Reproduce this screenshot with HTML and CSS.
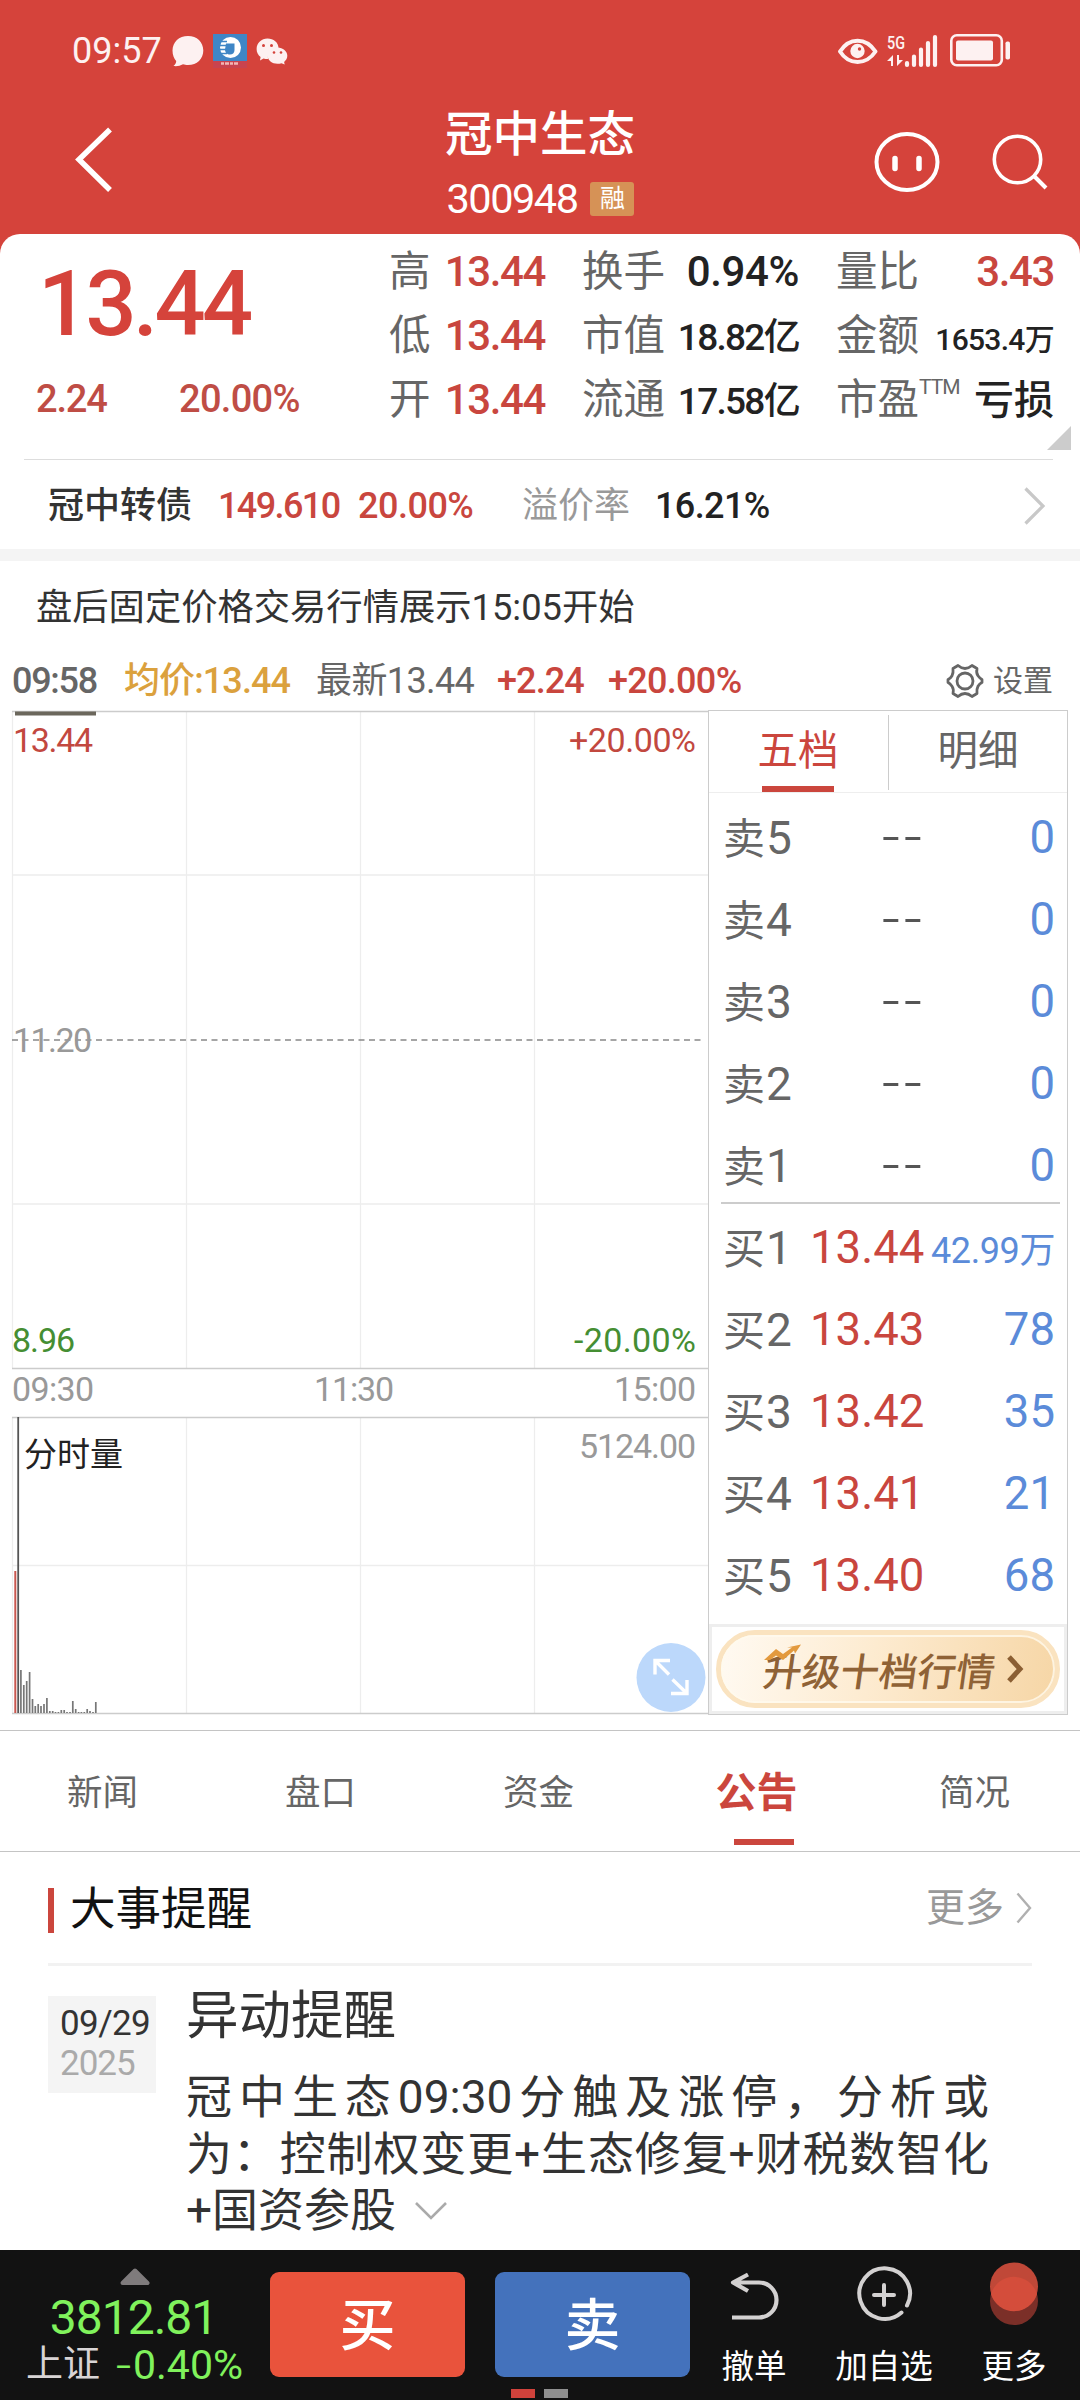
FILE: index.html
```html
<!DOCTYPE html>
<html lang="zh-CN">
<head>
<meta charset="utf-8">
<title>冠中生态 300948</title>
<link rel="stylesheet" href="styles.css">
</head>
<body>
<div class="screen">
  <header class="header">
    <div class="status">
      <span class="clock">09:57</span>
      <svg class="status-left" width="120" height="36" viewBox="170 33 120 36">
        <path fill="#fdf1f1" d="M188 36c9 0 15.300 6 15.300 14.500s-6.300 14.500-15.300 14.500c-2 0-3.500-.2-5-.7-3 1.700-6 2.200-9.500 1.800 2-1.600 2.700-3.200 2.700-5-2.200-2.700-3.700-6.200-3.700-10.600C172.500 42 179 36 188 36z"/>
        <rect x="213" y="34" width="34" height="34" fill="#3f86c6"/>
        <rect x="213" y="61" width="34" height="7" fill="#c9434e"/>
        <path d="M221 63.500h3M225 63.500h4M230 63.500h3M234 63.500h4" stroke="#f3b5b5" stroke-width="2.500"/>
        <circle cx="230.500" cy="47.500" r="10.500" fill="#fff"/>
        <path d="M226 43.500h8.500v6.500c0 3-2 4.500-4.500 4.500-3 0-5-2-5-5z" fill="#3f86c6"/>
        <path d="M219 41.500h8M219 45.500h7M219 49.500h7M219 53.500h8" stroke="#3f86c6" stroke-width="1.500"/>
        <path fill="#fdf1f1" d="M267.500 38.500c6 0 11 4 11 9.500-5.500.5-11.500 5-10.500 11-2 0-3 0-4.500-.6l-3.500 2 .6-3.400c-2.500-2-4-4.500-4-8 0-6 5-10.500 10.900-10.500z"/>
        <path fill="#fdf1f1" d="M277.500 47.500c5.500 0 9.800 3.700 9.800 8.300 0 2.500-1.200 4.600-3.200 6.100l.6 2.700-3.200-1.400c-1.300.4-2.600.6-4 .6-5.500 0-9.800-3.500-9.800-8s4.300-8.300 9.800-8.300z"/>
        <g fill="#d5433b"><circle cx="263.500" cy="45.500" r="1.500"/><circle cx="271.500" cy="45.500" r="1.500"/><circle cx="274" cy="52.500" r="1.300"/><circle cx="281" cy="52.500" r="1.300"/></g>
      </svg>
      <svg class="status-right" width="180" height="36" viewBox="835 33 180 36">
        <path d="M840 51.500c9-14.500 26-14.500 35.500 0-9.500 14-26.500 14-35.500 0z" fill="none" stroke="#fdf1f1" stroke-width="4" stroke-linejoin="round"/>
        <circle cx="857.500" cy="51" r="7.200" fill="#fdf1f1"/><circle cx="859.500" cy="49" r="1.700" fill="#d5433b"/>
        <text x="887" y="48.500" class="net" textLength="18" lengthAdjust="spacingAndGlyphs">5G</text>
        <path d="M893 66V55l-6 6h4v5zM897 55v11l6-6h-4v-5z" fill="#fdf1f1"/>
        <path d="M907 63v2M914 56.500v8.500M921 49.500v15.500M928 43v22M935 37v28" stroke="#fdf1f1" stroke-width="4.200" stroke-linecap="round"/>
        <rect x="951.300" y="35.300" width="50.500" height="30" rx="5.500" fill="none" stroke="#fdf1f1" stroke-width="2.600"/>
        <rect x="956" y="40.500" width="37" height="20" rx="2" fill="#fdf1f1"/>
        <rect x="1005.500" y="41.500" width="4.500" height="18" rx="1.800" fill="#fdf1f1"/>
      </svg>
    </div>
    <div class="nav">
      <svg class="back" width="44" height="72" viewBox="72 123 44 72"><path d="M110 129.500 79 159.500l31 30.500" fill="none" stroke="#fff" stroke-width="5.500"/></svg>
      <div class="title">
        <h1>冠中生态</h1>
        <div class="code-row"><span class="code">300948</span><span class="badge">融</span></div>
      </div>
      <svg class="nav-icons" width="180" height="68" viewBox="870 128 180 68">
        <ellipse cx="907" cy="162" rx="30.500" ry="28" fill="none" stroke="#fff" stroke-width="4"/>
        <path d="M895 158.500v10M919 158.500v10" stroke="#fff" stroke-width="5.500" stroke-linecap="round"/>
        <circle cx="1017.500" cy="159.500" r="23.200" fill="none" stroke="#fff" stroke-width="3.600"/>
        <path d="M1034 176l12 12" stroke="#fff" stroke-width="4"/>
      </svg>
    </div>
  </header>

  <section class="quote">
    <div class="price-block">
      <div class="price">13.44</div>
      <div class="change"><span class="diff">2.24</span><span>20.00%</span></div>
    </div>
    <div class="stats">
      <div class="col col-a">
        <div class="stat"><label>高</label><b class="up">13.44</b></div>
        <div class="stat"><label>低</label><b class="up">13.44</b></div>
        <div class="stat"><label>开</label><b class="up">13.44</b></div>
      </div>
      <div class="col col-b">
        <div class="stat"><label>换手</label><b class="pct">0.94%</b></div>
        <div class="stat"><label>市值</label><b class="mid">18.82亿</b></div>
        <div class="stat"><label>流通</label><b class="mid">17.58亿</b></div>
      </div>
      <div class="col col-c">
        <div class="stat"><label>量比</label><b class="up">3.43</b></div>
        <div class="stat"><label>金额</label><b class="small">1653.4万</b></div>
        <div class="stat"><label>市盈<sup>TTM</sup></label><b class="cjk">亏损</b></div>
      </div>
    </div>
    <i class="corner"></i>
  </section>

  <section class="bond">
    <span class="bond-name">冠中转债</span>
    <span class="bond-price">149.610</span>
    <span class="bond-pct">20.00%</span>
    <span class="bond-label">溢价率</span>
    <span class="bond-prem">16.21%</span>
    <svg class="bond-arrow" width="24" height="40" viewBox="0 0 24 40"><path d="M2.500 2.500 20 20 2.500 37.500" fill="none" stroke="#c8c8c8" stroke-width="3.200"/></svg>
  </section>

  <div class="notice">盘后固定价格交易行情展示15:05开始</div>

  <div class="ticker">
    <span class="t-time">09:58</span>
    <span class="t-avg">均价:<i>13.44</i></span>
    <span class="t-last">最新<i>13.44</i></span>
    <span class="t-diff">+2.24</span>
    <span class="t-pct">+20.00%</span>
    <span class="t-set">
      <svg width="38" height="36" viewBox="-19 -18 38 36"><path d="M-7-15.500Q-3.500-12.500 0-12.500T7-15.500L12-12.500Q11-8 13-5.200T17-1.500V1.500Q14.500 2.500 13 5.200T12 12.500L7 15.500Q3.500 12.500 0 12.500T-7 15.500L-12 12.500Q-11 8-13 5.200T-17 1.500V-1.500Q-14.500-2.500-13-5.200T-12-12.500Z" fill="none" stroke="#666" stroke-width="2.800" stroke-linejoin="round"/><circle r="8" fill="none" stroke="#666" stroke-width="2.800"/></svg>
      设置
    </span>
  </div>

  <main class="market">
    <svg class="chart" width="708" height="1014" viewBox="0 705 708 1014">
      <g fill="none" stroke="#ededed" stroke-width="1.300">
        <path d="M12.500 711V1368M186.500 711V1368M360.500 711V1368M534.500 711V1368M12.500 1417V1713M186.500 1417V1713M360.500 1417V1713M534.500 1417V1713M12 875H708M12 1204H708M12 1565.500H708"/>
      </g>
      <path d="M12 711.500H708M12 1368.500H708M12 1417.500H708M12 1713.500H708" stroke="#ccc" stroke-width="1.400"/>
      <path d="M12 1040H703" stroke="#888" stroke-width="1.700" stroke-dasharray="6 4.500"/>
      <path d="M15 713.500H96" stroke="#6b675c" stroke-width="4"/>
      <g class="axis">
        <text class="rise" x="13" y="752" textLength="80">13.44</text>
        <text class="rise" x="569" y="752" textLength="127">+20.00%</text>
        <text x="13" y="1052" textLength="79">11.20</text>
        <text class="fall" x="12" y="1352" textLength="63">8.96</text>
        <text class="fall" x="574" y="1352" textLength="122">-20.00%</text>
        <text x="12" y="1401" textLength="82">09:30</text>
        <text x="314" y="1401" textLength="80">11:30</text>
        <text x="614" y="1401" textLength="82">15:00</text>
        <text x="579" y="1458" textLength="117">5124.00</text>
        <text class="vol-name" x="24" y="1466">分时量</text>
      </g>
      <path d="M15.300 1571V1713" stroke="#c9574f" stroke-width="2"/>
      <path d="M18.200 1417V1713" stroke="#555" stroke-width="1.800"/>
      <path stroke="#777" stroke-width="1.700" d="M20.900 1670V1713M23.800 1685V1713M26.700 1681V1713M29.600 1672V1713M32.500 1699V1713M35.300 1706V1713M38.200 1704V1713M41 1706V1713M44 1704V1713M46.900 1698V1713M49.800 1711V1713M52.700 1711V1713M55.500 1712V1713M58.400 1712V1713M61.300 1710V1713M64.200 1710V1713M67 1712V1713M70 1712V1713M72.800 1701V1713M75.700 1709V1713M78.600 1712V1713M81.400 1712V1713M84.300 1712V1713M87.200 1709V1713M90 1711V1713M93 1712V1713M95.800 1702V1713"/>
      <circle cx="671" cy="1677.500" r="34.500" fill="#bcd8fb"/>
      <path d="M655 1674.500V1660.500H670M656 1661.500 669 1674.500M672.500 1679.500 686 1692.500M687 1680V1693.500H671" fill="none" stroke="#fff" stroke-width="3.400"/>
    </svg>

    <aside class="book">
      <div class="book-tabs"><span class="active">五档</span><span>明细</span></div>
      <div class="levels">
        <div class="level"><span>卖<i>5</i></span><em class="none">--</em><b>0</b></div>
        <div class="level"><span>卖<i>4</i></span><em class="none">--</em><b>0</b></div>
        <div class="level"><span>卖<i>3</i></span><em class="none">--</em><b>0</b></div>
        <div class="level"><span>卖<i>2</i></span><em class="none">--</em><b>0</b></div>
        <div class="level last-sell"><span>卖<i>1</i></span><em class="none">--</em><b>0</b></div>
        <div class="level"><span>买<i>1</i></span><em>13.44</em><b class="wan">42.99万</b></div>
        <div class="level"><span>买<i>2</i></span><em>13.43</em><b>78</b></div>
        <div class="level"><span>买<i>3</i></span><em>13.42</em><b>35</b></div>
        <div class="level"><span>买<i>4</i></span><em>13.41</em><b>21</b></div>
        <div class="level"><span>买<i>5</i></span><em>13.40</em><b>68</b></div>
      </div>
      <div class="upgrade">
        <div class="pill">
          <span class="pill-text">升级十档行情</span>
          <svg class="pill-arrow" width="18" height="28" viewBox="0 0 18 28"><path d="M2 2 13 14 2 26" fill="none" stroke="#8b5f33" stroke-width="5"/></svg>
          <svg class="trend" width="38" height="18" viewBox="0 0 38 18"><path d="M0 16 12 5l7 5L28 3.500h-5l14-3-6 9-1-3-11 9.500-7-4.500-6 4.500z" fill="#e39a3e"/></svg>
        </div>
      </div>
    </aside>
  </main>

  <nav class="tabs">
    <span>新闻</span><span>盘口</span><span>资金</span><span class="active">公告</span><span>简况</span>
  </nav>

  <section class="events">
    <div class="events-head">
      <h2>大事提醒</h2>
      <span class="more">更多<svg width="16" height="32" viewBox="0 0 16 32"><path d="M1.500 1.500 14 16 1.500 30.500" fill="none" stroke="#b0b0b0" stroke-width="2.400"/></svg></span>
    </div>
    <article class="event">
      <div class="date"><span>09/29</span><span class="year">2025</span></div>
      <div class="event-body">
        <h3>异动提醒</h3>
        <p>冠中生态09:30分触及涨停，分析或为：控制权变更+生态修复+财税数智化+国资参股<svg class="fold" width="34" height="20" viewBox="0 0 34 20"><path d="M2 2 17 17 32 2" fill="none" stroke="#aaa" stroke-width="2.600"/></svg></p>
      </div>
    </article>
  </section>

  <footer class="bar">
    <div class="index">
      <svg width="32" height="18" viewBox="0 0 32 18"><path d="M16 2.500 28.500 15h-25z" fill="#7f7b7c" stroke="#7f7b7c" stroke-width="4" stroke-linejoin="round"/></svg>
      <div class="index-value">3812.81</div>
      <div class="index-row"><span class="index-name">上证</span><span class="index-pct"><i>-</i>0.40%</span></div>
    </div>
    <div class="btn buy">买</div>
    <div class="btn sell">卖</div>
    <div class="action act-1">
      <svg width="56" height="56" viewBox="727 2266 56 56"><path d="M749 2274.500 734 2282.500l15 8.500M735 2282.500h25a17.500 17.500 0 0 1 0 35h-27" fill="none" stroke="#d3d1d1" stroke-width="4.200" stroke-linejoin="round"/></svg>
      <span>撤单</span>
    </div>
    <div class="action act-2">
      <svg width="60" height="56" viewBox="855 2266 60 56"><path d="M908 2305.500A25.300 25.300 0 1 0 902.500 2312.500" fill="none" stroke="#d3d1d1" stroke-width="4" stroke-linecap="round"/><path d="M885 2285v20M875 2295h20" stroke="#d3d1d1" stroke-width="4" stroke-linecap="round"/></svg>
      <span>加自选</span>
    </div>
    <div class="action act-3">
      <svg width="52" height="66" viewBox="988 2261 52 66"><circle cx="1014" cy="2302" r="24" fill="#7b2f28"/><circle cx="1014" cy="2287.500" r="24" fill="#c04838"/><path d="M991 2295a24 24 0 0 1 46 0 24 24 0 0 1-46 0z" fill="#d44d3b"/></svg>
      <span>更多</span>
    </div>
    <div class="dots"><i></i><i></i></div>
  </footer>
</div>
</body>
</html>
```
FILE: styles.css
```css
* { box-sizing: border-box; }
body { margin: 0; background: #fff; font-family: Roboto, "Noto Sans CJK SC", sans-serif; color: #333; }
h1, h2, h3, p { margin: 0; font-weight: 400; }
i, em { font-style: normal; }
b { font-weight: 500; }
svg { display: block; flex: none; }
span { white-space: nowrap; }
.screen { width: 1080px; height: 2400px; overflow: hidden; display: flex; flex-direction: column; background: #d5433b; }

/* header */
.header { flex: none; height: 234px; color: #fff; }
.status { height: 100px; padding-top: 1px; display: flex; align-items: center; }
.clock { width: 98px; margin-left: 72px; font-size: 36px; color: #fdf1f1; letter-spacing: 0; }
.status-right { margin-left: 545px; }
.net { font: 500 18px Roboto, sans-serif; fill: #fdf1f1; }
.nav { height: 134px; display: flex; align-items: flex-start; }
.back { margin: 23px 0 0 72px; }
.title { width: 400px; margin-left: 224px; padding-top: 3px; display: flex; flex-direction: column; align-items: center; }
h1 { font-size: 47.500px; line-height: 64px; font-weight: 500; height: 64px; }
.code-row { display: flex; align-items: center; height: 36px; margin-top: 14px; font-size: 41.500px; line-height: 38px; letter-spacing: -1.500px; padding-left: 1px; }
.badge { margin-left: 13px; width: 44px; height: 34px; border-radius: 3px; background: #d69256; font-size: 25px; line-height: 33px; letter-spacing: 0; text-align: center; }
.nav-icons { margin: 28px 0 0 130px; }

/* quote */
.quote { flex: none; height: 225px; position: relative; background: #fff; border-radius: 20px 20px 0 0; display: flex; }
.price-block { width: 388px; color: #d5433b; }
.price { margin: 21px 0 0 38px; font-size: 90px; line-height: 100px; font-weight: 500; letter-spacing: -3.600px; }
.change { display: flex; margin-top: 22px; padding-left: 36px; font-size: 38px; line-height: 44px; color: #bf4d45; font-weight: 500; }
.change span { letter-spacing: -0.700px; }
.change .diff { width: 143px; letter-spacing: -1.200px; }
.stats { display: flex; padding-top: 6px; }
.col-a { width: 156px; margin-left: 1px; margin-right: 37px; }
.col-b { width: 217px; margin-right: 37px; }
.col-c { width: 218px; }
.stat { display: flex; justify-content: space-between; align-items: baseline; height: 64px; line-height: 64px; }
.stat label { font-size: 41.500px; color: #666; white-space: nowrap; }
.stat b { font-size: 42px; color: #222; white-space: nowrap; letter-spacing: -1.400px; }
.stat b.up { color: #c9463e; }
.stat b.pct { letter-spacing: -0.400px; }
.stat b.mid { font-size: 37px; letter-spacing: -1.700px; }
.stat b.small { font-size: 30px; letter-spacing: -0.700px; }
.stat b.cjk { font-size: 40px; letter-spacing: 0; }
sup { font-size: 21px; line-height: 0; vertical-align: 20px; letter-spacing: -1px; }
.corner { position: absolute; left: 1047px; top: 192px; border-left: 24px solid transparent; border-bottom: 24px solid #ccc; }

/* convertible bond */
.bond { flex: none; height: 102px; background: #fff; border-bottom: 12px solid #f4f4f4; display: flex; align-items: center; font-size: 36px; line-height: 44px; position: relative; padding-top: 4px; }
.bond::before { content: ""; position: absolute; left: 24px; right: 27px; top: 0; height: 1px; background: #ddd; }
.bond-name { width: 170px; margin-left: 48px; color: #333; font-weight: 500; }
.bond-price, .bond-pct { color: #c9463e; font-weight: 500; }
.bond-price { width: 140px; letter-spacing: -1.600px; }
.bond-pct { width: 164px; letter-spacing: -0.500px; }
.bond-label { width: 133px; color: #999; }
.bond-prem { color: #222; font-weight: 500; letter-spacing: -0.600px; }
.bond-arrow { margin-left: auto; margin-right: 33px; }

.notice { flex: none; height: 89px; padding: 3px 0 0 36px; background: #fff; font-size: 36.300px; line-height: 88px; }

.ticker { flex: none; height: 55px; background: #fff; display: flex; align-items: center; font-size: 36px; letter-spacing: -0.900px; color: #666; line-height: 44px; padding-top: 7px; }
.t-time { width: 112px; margin-left: 12px; font-weight: 500; letter-spacing: -1.300px; }
.t-avg { width: 192px; color: #dba13d; font-weight: 500; }
.t-last { width: 181px; letter-spacing: -0.600px; }
.t-diff { width: 111px; color: #c9463e; font-weight: 500; }
.t-pct { color: #c9463e; font-weight: 500; letter-spacing: -0.700px; }
.t-set { margin-left: auto; margin-right: 27px; display: flex; gap: 9px; align-items: center; font-size: 30px; letter-spacing: 0; height: 44px; }

/* chart and order book */
.market { flex: none; height: 1025px; background: #fff; display: flex; align-items: flex-start; }
.axis text { font: 34px Roboto, sans-serif; fill: #999; }
.axis .rise { fill: #c2483f; }
.axis .fall { fill: #458e33; }
.axis .vol-name { font: 33px "Noto Sans CJK SC", sans-serif; fill: #222; }
.book { width: 360px; height: 1005px; margin-top: 5px; border: 1px solid #ccc; display: flex; flex-direction: column; }
.book-tabs { height: 82px; display: flex; border-bottom: 1px solid #eee; font-size: 40.500px; line-height: 80px; color: #666; }
.book-tabs span { flex: 1; text-align: center; }
.book-tabs .active { color: #cb463d; position: relative; padding-right: 2px; }
.book-tabs .active::before { content: ""; position: absolute; left: 53px; bottom: 0; width: 72px; height: 6px; background: #cb463d; }
.book-tabs .active::after { content: ""; position: absolute; right: 0; top: 4px; width: 1px; height: 75px; background: #ccc; }
.levels { padding-top: 3px; flex: 1; }
.level { height: 82px; display: grid; grid-template-columns: 87px 114px 1fr; padding: 0 12px 0 14px; line-height: 84px; font-size: 45.500px; position: relative; }
.level span { font-size: 42px; color: #666; }
.level span i { font-size: 46px; margin-left: 1px; }
.level em { color: #c9463e; white-space: nowrap; letter-spacing: 0; }
.level em.none { font-family: Inter, sans-serif; font-size: 49px; font-weight: 300; line-height: 82px; color: #555; text-align: right; }
.level b { color: #5b8bd9; font-weight: 400; text-align: right; white-space: nowrap; }
.level b.wan { font-size: 36px; line-height: 90px; margin-left: -10px; letter-spacing: -0.400px; }
.last-sell::after { content: ""; position: absolute; left: 12px; right: 7px; top: 78px; height: 2px; background: #ccc; }
.upgrade { height: 90px; border: 3px solid #eee; padding: 3px 4px; }
.pill { position: relative; height: 78px; border-radius: 39px; background: linear-gradient(100deg, #fffaf2, #fdebd0 45%, #f6d6a6); border: 5px solid #fae3c0; display: flex; align-items: center; padding-left: 43px; }
.pill::before { content: ""; position: absolute; inset: 0; border: 2px solid rgba(255, 250, 238, 0.800); border-radius: 36px; }
.pill-text { font-family: "Noto Sans CJK SC", sans-serif; font-size: 38.600px; line-height: 68px; font-weight: 500; color: #8f6236; transform: skewX(-8deg); }
.pill-arrow { margin-left: 12px; }
.trend { position: absolute; left: 43px; top: 9px; }

/* section tabs */
.tabs { flex: none; height: 122px; background: #fff; border-top: 1px solid #c4c4c4; border-bottom: 1px solid #c4c4c4; padding-right: 3px; display: flex; justify-content: center; }
.tabs span { width: 218px; flex: none; text-align: center; font-size: 35.500px; line-height: 124px; color: #666; position: relative; }
.tabs .active { color: #cb463d; font-weight: 700; font-size: 41px; }
.tabs .active::after { content: ""; position: absolute; left: 86px; top: 108px; width: 60px; height: 6px; background: #cb463d; }

/* events */
.events { flex: 1; background: #fff; padding: 0 48px; }
.events-head { height: 114px; border-bottom: 3px solid #f2f2f2; display: flex; justify-content: space-between; align-items: flex-start; }
h2 { margin-top: 36px; height: 45px; border-left: 6px solid #cb463d; padding-left: 16px; font-size: 45.500px; line-height: 44px; color: #111; }
.more { margin-top: 34px; display: flex; align-items: center; gap: 12px; font-size: 39px; line-height: 44px; color: #999; }
.event { display: flex; padding-top: 30px; }
.date { width: 108px; height: 97px; background: #f4f4f4; padding: 8px 0 0 12px; font-size: 35px; line-height: 40px; display: flex; flex-direction: column; letter-spacing: -0.600px; }
.year { color: #aaa; letter-spacing: -1px; }
.event-body { width: 803px; margin-left: 30px; }
h3 { font-size: 52.500px; line-height: 60px; margin-top: -10px; }
.event p { margin-top: 23px; font-size: 46px; line-height: 56.500px; text-align: justify; letter-spacing: 0; }
.fold { display: inline-block; margin-left: 18px; vertical-align: 5px; }

/* bottom bar */
.bar { flex: none; height: 150px; background: #121212; display: flex; align-items: flex-start; position: relative; }
.index { width: 270px; height: 150px; display: flex; flex-direction: column; align-items: center; color: #80f25c; padding-top: 18px; }
.index svg { margin-bottom: 9px; }
.index-value { font-size: 48px; line-height: 46px; letter-spacing: -1px; padding-right: 3px; }
.index-row { display: flex; width: 100%; padding-left: 26px; margin-top: 1px; line-height: 46px; }
.index-name { font-size: 37px; color: #d8d4d5; width: 88px; }
.index-pct { font-size: 41px; display: flex; letter-spacing: 0; }
.index-pct i { font-family: Inter, sans-serif; font-size: 42px; font-weight: 300; }
.btn { width: 195px; height: 105px; margin-top: 22px; border-radius: 9px; text-align: center; font-size: 56px; line-height: 109px; font-weight: 500; color: #fff; }
.buy { background: #e9533c; }
.sell { background: #4472bc; margin-left: 30px; }
.action { display: flex; flex-direction: column; align-items: center; justify-content: flex-end; height: 140px; font-size: 32.500px; line-height: 46px; color: #fff; }
.action svg { margin-bottom: 22px; }
.act-3 svg { margin-bottom: 18px; }
.act-1 { width: 66px; margin-left: 31px; }
.act-2 { width: 100px; margin-left: 47px; }
.act-3 { width: 66px; margin-left: 47px; }
.dots { position: absolute; left: 511px; top: 139px; display: flex; gap: 9px; }
.dots i { width: 24px; height: 9px; background: #d0423b; }
.dots i + i { background: #8f8f8f; }
```
